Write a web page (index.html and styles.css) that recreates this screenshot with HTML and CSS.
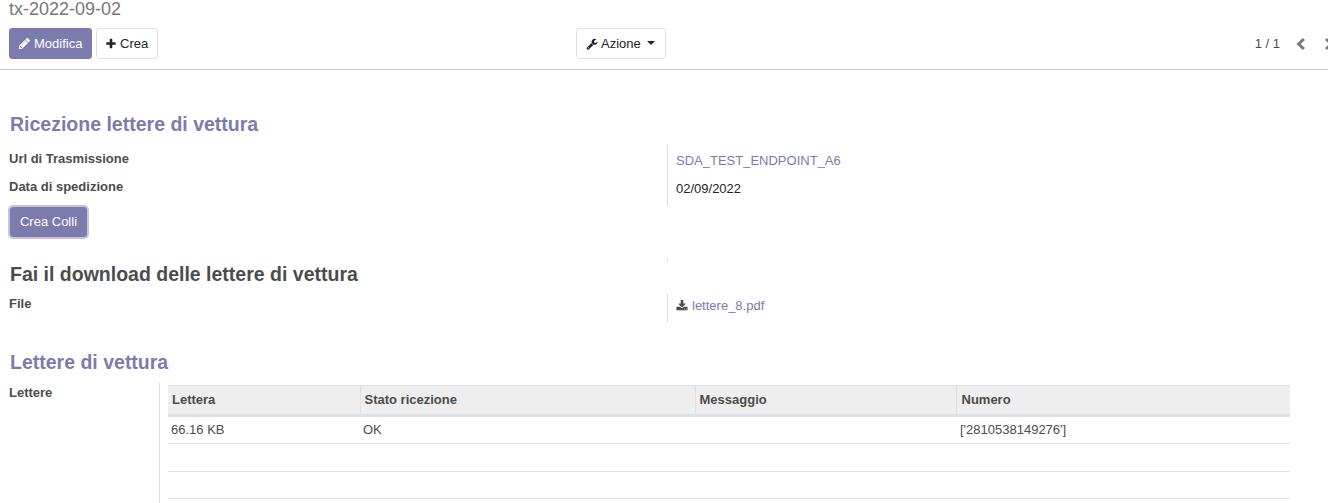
FILE: index.html
```html
<!DOCTYPE html>
<html lang="it">
<head>
<meta charset="utf-8">
<title>tx-2022-09-02</title>
<link rel="stylesheet" href="styles.css">
</head>
<body>
<header class="panel">
  <div class="crumb">tx-2022-09-02</div>
  <div class="toolbar">
    <div class="actions">
      <button class="btn btn-primary"><svg class="icon" viewBox="0 0 1792 1792"><path d="M491 1536l91-91-235-235-91 91v107h128v128h107zm523-928q0-22-22-22-10 0-17 7l-542 542q-7 7-7 17 0 22 22 22 10 0 17-7l542-542q7-7 7-17zm-54-192l416 416-832 832h-416v-416zm683 96q0 53-37 90l-166 166-416-416 166-165q36-38 90-38 53 0 91 38l235 234q37 39 37 91z"/></svg>Modifica</button>
      <button class="btn btn-light btn-create"><svg class="icon" viewBox="0 0 1792 1792"><path d="M1600 736v192q0 40-28 68t-68 28h-416v416q0 40-28 68t-68 28h-192q-40 0-68-28t-28-68v-416h-416q-40 0-68-28t-28-68v-192q0-40 28-68t68-28h416v-416q0-40 28-68t68-28h192q40 0 68 28t28 68v416h416q40 0 68 28t28 68z"/></svg>Crea</button>
    </div>
    <button class="btn btn-light btn-action"><svg class="icon" viewBox="0 0 1792 1792"><path d="M448 1472q0-26-19-45t-45-19-45 19-19 45 19 45 45 19 45-19 19-45zm644-420l-682 682q-37 37-90 37-52 0-91-37l-106-108q-38-36-38-90 0-53 38-91l681-681q39 98 114.5 173.5t173.5 114.5zm634-435q0 39-23 106-47 134-164.5 217.5t-258.5 83.5q-185 0-316.5-131.5t-131.5-316.5 131.5-316.5 316.5-131.5q58 0 121.5 16.5t107.5 46.5q16 11 16 28t-16 28l-293 169v224l193 107q5-3 79-48.5t135.5-81 70.5-35.5q15 0 23.5 10t8.5 25z"/></svg>Azione<span class="caret"></span></button>
    <div class="pager">
      <span class="pager-count">1 / 1</span>
      <svg class="chev" viewBox="0 0 12 14"><polyline points="9,2 3.5,7 9,12"/></svg>
      <svg class="chev" viewBox="0 0 12 14"><polyline points="3,2 8.5,7 3,12"/></svg>
    </div>
  </div>
</header>

<main class="sheet">
  <h2 class="heading heading-first">Ricezione lettere di vettura</h2>
  <section class="group group-reception">
    <div class="labels">
      <div class="label label-url">Url di Trasmissione</div>
      <div class="label label-date">Data di spedizione</div>
    </div>
    <div class="values">
      <a class="link value-url">SDA_TEST_ENDPOINT_A6</a>
      <div class="value-date">02/09/2022</div>
    </div>
  </section>
  <button class="btn btn-submit">Crea Colli</button>
  <div class="stub"></div>

  <h2 class="heading heading-dark">Fai il download delle lettere di vettura</h2>
  <section class="group group-file">
    <div class="labels"><div class="label label-file">File</div></div>
    <div class="values"><a class="link file-link"><svg class="icon icon-dl" viewBox="0 0 1792 1792"><path d="M1344 1344q0-26-19-45t-45-19-45 19-19 45 19 45 45 19 45-19 19-45zm256 0q0-26-19-45t-45-19-45 19-19 45 19 45 45 19 45-19 19-45zm128-224v320q0 40-28 68t-68 28h-1472q-40 0-68-28t-28-68v-320q0-40 28-68t68-28h465l135 136q58 56 136 56t136-56l136-136h464q40 0 68 28t28 68zm-325-569q17 41-14 70l-448 448q-18 19-45 19t-45-19l-448-448q-31-29-14-70 17-39 59-39h256v-448q0-26 19-45t45-19h256q26 0 45 19t19 45v448h256q42 0 59 39z"/></svg>lettere_8.pdf</a></div>
  </section>

  <h2 class="heading heading-last">Lettere di vettura</h2>
  <section class="group-letters">
    <div class="label label-letters">Lettere</div>
    <div class="table-wrap">
      <table class="grid">
        <thead>
          <tr><th class="col-a">Lettera</th><th class="col-b">Stato ricezione</th><th class="col-c">Messaggio</th><th class="col-d">Numero</th></tr>
        </thead>
        <tbody>
          <tr><td>66.16 KB</td><td>OK</td><td></td><td class="cell-number">['2810538149276']</td></tr>
          <tr class="empty"><td></td><td></td><td></td><td></td></tr>
          <tr class="empty"><td></td><td></td><td></td><td></td></tr>
        </tbody>
      </table>
    </div>
  </section>
</main>
</body>
</html>
```
FILE: styles.css
```css
* { box-sizing: border-box; }
html, body { margin: 0; height: 503px; overflow: hidden; background: #fff; }
body { font: 13px/18px "Liberation Sans", Arial, sans-serif; color: #4c4c4c; width: 1328px; }

.panel { width: 1328px; height: 70px; border-bottom: 1px solid #ccc; padding: 0 0 0 9px; }
.crumb { font-size: 18px; line-height: 18px; height: 28px; color: #777; }
.toolbar { display: flex; align-items: flex-start; width: 1326px; }
.actions { display: flex; gap: 4px; width: 567px; }

.btn { font: 13px/18px "Liberation Sans", Arial, sans-serif; height: 31px; padding: 0 9px; border: 1px solid transparent; border-radius: 3px; display: inline-flex; align-items: center; background: #fff; cursor: pointer; }
.btn-primary { width: 83px; padding-left: 8px; background: #7c7bad; border-color: #7c7bad; color: #fff; }
.btn-primary .icon { width: 13px; height: 13px; }
.btn-light { color: #212529; border-color: #dee2e6; }
.btn-create { width: 62px; padding-left: 8px; }
.btn-action { width: 90px; }
.icon { width: 12px; height: 12px; fill: currentColor; margin-right: 3px; flex: none; }
.caret { display: inline-block; margin-left: 6px; margin-bottom: 2px; border-top: 4px solid #212529; border-left: 4px solid transparent; border-right: 4px solid transparent; }

.pager { margin-left: auto; display: flex; align-items: center; height: 31px; color: #4c4c4c; }
.pager-count { margin-right: 15px; }
.chev { width: 12px; height: 14px; fill: none; stroke: #777; stroke-width: 2.8; margin-right: 16px; }
.chev:last-child { margin-right: 0; }

.sheet { padding-top: 40px; }
.heading { font-size: 19.5px; line-height: 26px; font-weight: 700; margin: 0 0 0 10px; color: #7c7bad; }
.heading-first { margin-top: 1px; margin-bottom: 8px; }
.heading-dark { color: #4c4c4c; margin-top: 0; margin-bottom: 7px; }
.heading-last { margin-top: 27px; margin-bottom: 8px; }

.group { display: grid; grid-template-columns: 667px 1fr; }
.group-reception { height: 61px; }
.group-file { height: 28px; }
.label { font-weight: 700; padding-left: 9px; color: #4c4c4c; }
.label-url { margin-top: 5px; }
.label-date { margin-top: 10px; }
.label-file { margin-top: 1px; }
.values { border-left: 1px solid #ddd; padding-left: 8px; }
.link { display: block; color: #7c7bad; }
.value-url { margin-top: 7px; }
.value-date { margin-top: 10px; color: #212529; }
.file-link { display: flex; align-items: center; margin-top: 3px; }
.icon-dl { margin-right: 4px; color: #4c4c4c; }

.btn-submit { display: flex; margin: 1px 0 0 10px; width: 77px; height: 30px; padding: 0; justify-content: center; background: #7c7bad; border-color: #7c7bad; color: #fff; box-shadow: 0 0 0 2px #c5c4dc; }
.stub { margin: 21px 0 0 667px; width: 1px; height: 3px; background: #ddd; }

.group-letters { display: grid; grid-template-columns: 159px 1fr; height: 120px; }
.label-letters { margin-top: 1px; }
.table-wrap { border-left: 1px solid #ddd; padding: 2px 38px 0 8px; }
.grid { width: 1122px; border-collapse: collapse; table-layout: fixed; color: #4c4c4c; }
.grid th { height: 30px; padding: 0 4px; text-align: left; font-weight: 700; background: #eee; border: 1px solid #dee2e6; border-width: 1px 1px 3px 0; }
.grid th:last-child { border-right: 0; }
.col-a { width: 192px; }
.col-b { width: 335px; }
.col-c { width: 261px; }
.grid th.col-d { padding-left: 5px; }
.grid td { height: 28px; padding: 0 3px; border-bottom: 1px solid #dee2e6; }
.grid td.cell-number { padding-left: 4px; }
.grid .empty td { height: 27.5px; }
```
